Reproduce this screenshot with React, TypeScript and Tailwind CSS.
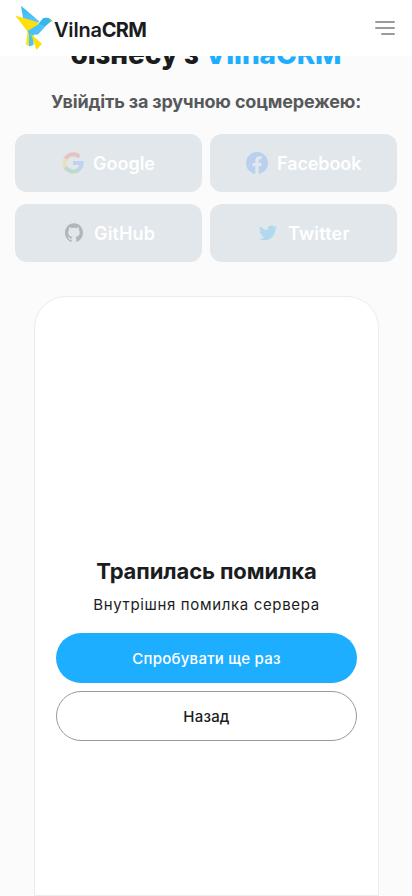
import React from 'react';

function BirdMark() {
  return (
    <svg className="h-[46px] w-[39px] shrink-0" viewBox="0 0 39 46" aria-hidden="true">
      <defs>
        <linearGradient id="sky" x1="0" y1="0" x2="0" y2="1">
          <stop offset="0" stopColor="#36b5ee" />
          <stop offset="1" stopColor="#5fc9f8" />
        </linearGradient>
      </defs>
      <path d="M6 .7 24.500 16.500 22 18.500 8 13.500Z" fill="url(#sky)" />
      <path d="M0.300 10.500 23.500 17.500 22.500 20.500 12.500 26.500Z" fill="#ffdf0a" />
      <path d="M12.500 26 23 19.500 28 13.500Q32 12 35 14L37 15.500 33 18.500 23 29.500 13.500 30Z" fill="#4cc1f5" />
      <path d="M23.500 19 28 13.500Q32 12 35 14L37 15.500 30.500 21Z" fill="#38b5ea" />
      <path d="M34.500 14 38.500 16.500 35.500 16.300Z" fill="#a9cf72" />
      <path d="M12.500 27 15 29 14 41 11 39.500Z" fill="#ffdf0a" />
      <path d="M14 28 18.500 29 18.500 40 14 41.500Z" fill="#4cc1f5" />
      <path d="M16 29 27 38.800 21.500 45Z" fill="#ffdf0a" />
    </svg>
  );
}

function GoogleIcon() {
  return (
    <svg className="size-[22px]" viewBox="0 0 22 22" fill="none" strokeWidth="4">
      <path d="M3.500 6.800A8.700 8.700 0 0 1 17.300 5" stroke="#e8c1c3" />
      <path d="M3.600 15.300A8.800 8.800 0 0 1 3.500 6.800" stroke="#eadfb8" />
      <path d="M17 17.400A8.700 8.700 0 0 1 3.600 15.300" stroke="#bddbcc" />
      <path d="M11 11H19.700A8.700 8.700 0 0 1 16.200 17.900" stroke="#bfd2ee" />
    </svg>
  );
}

function FacebookIcon() {
  return (
    <svg className="size-[22px]" viewBox="0 0 24 24" fill="#b9d0ee">
      <path d="M24 12.073c0-6.627-5.373-12-12-12s-12 5.373-12 12c0 5.990 4.388 10.954 10.125 11.854v-8.385H7.078v-3.470h3.047V9.430c0-3.007 1.792-4.669 4.533-4.669 1.312 0 2.686.235 2.686.235v2.953H15.830c-1.491 0-1.956.925-1.956 1.874v2.250h3.328l-.532 3.470h-2.796v8.385C19.612 23.027 24 18.062 24 12.073z" />
    </svg>
  );
}

function GitHubIcon() {
  return (
    <svg className="-mt-px h-[19px] w-[18px]" viewBox="0 0 24 24" preserveAspectRatio="none" fill="#b0b6b9">
      <path d="M12 .297c-6.630 0-12 5.373-12 12 0 5.303 3.438 9.800 8.205 11.385.600.113.820-.258.820-.577 0-.285-.010-1.040-.015-2.040-3.338.724-4.042-1.610-4.042-1.610C4.422 18.070 3.633 17.700 3.633 17.700c-1.087-.744.084-.729.084-.729 1.205.084 1.838 1.236 1.838 1.236 1.070 1.835 2.809 1.305 3.495.998.108-.776.417-1.305.760-1.605-2.665-.300-5.466-1.332-5.466-5.930 0-1.310.465-2.380 1.235-3.220-.135-.303-.540-1.523.105-3.176 0 0 1.005-.322 3.300 1.230.960-.267 1.980-.399 3-.405 1.020.006 2.040.138 3 .405 2.280-1.552 3.285-1.230 3.285-1.230.645 1.653.240 2.873.120 3.176.765.840 1.230 1.910 1.230 3.220 0 4.610-2.805 5.625-5.475 5.920.420.360.810 1.096.810 2.220 0 1.606-.015 2.896-.015 3.286 0 .315.210.690.825.570C20.565 22.092 24 17.592 24 12.297c0-6.627-5.373-12-12-12" />
    </svg>
  );
}

function TwitterIcon() {
  return (
    <svg className="size-[18px]" viewBox="0 0 24 24" fill="#b0d9ed">
      <path d="M23.953 4.570a10 10 0 01-2.825.775 4.958 4.958 0 002.163-2.723c-.951.555-2.005.959-3.127 1.184a4.920 4.920 0 00-8.384 4.482C7.690 8.095 4.067 6.130 1.640 3.162a4.822 4.822 0 00-.666 2.475c0 1.710.870 3.213 2.188 4.096a4.904 4.904 0 01-2.228-.616v.060a4.923 4.923 0 003.946 4.827 4.996 4.996 0 01-2.212.085 4.936 4.936 0 004.604 3.417 9.867 9.867 0 01-6.102 2.105c-.390 0-.779-.023-1.170-.067a13.995 13.995 0 007.557 2.209c9.053 0 13.998-7.496 13.998-13.985 0-.210 0-.420-.015-.630A9.935 9.935 0 0024 4.590z" />
    </svg>
  );
}

function SocialButton({ icon, label, place, text }: { icon: React.ReactNode; label: string; place: string; text: string }) {
  return (
    <button disabled className={`flex h-[58px] items-center rounded-xl bg-[#e1e7ea] ${place}`}>
      {icon}
      <span className={`mt-0.5 whitespace-nowrap text-[18px] leading-[22px] font-semibold text-white ${text}`}>{label}</span>
    </button>
  );
}

export default function App() {
  return (
    <div className="flex h-[896px] w-full flex-col overflow-hidden bg-[#fbfbfb] font-['Inter','Noto_Sans',sans-serif] text-[#1a1c1e]">
      <header className="relative z-10 flex h-14 shrink-0 items-center justify-between bg-white pr-[17px] pl-[15px]">
        <div className="flex items-center">
          <BirdMark />
          <span className="mt-[3px] whitespace-nowrap text-[20px] leading-6 font-semibold tracking-[-0.2px]">
            Vilna<span className="font-bold tracking-[-0.7px]">CRM</span>
          </span>
        </div>
        <button className="flex w-5 flex-col items-end gap-1" aria-label="Меню">
          <span className="h-0.5 w-5 rounded-full bg-[#969b9d]" />
          <span className="h-0.5 w-5 rounded-full bg-[#969b9d]" />
          <span className="h-0.5 w-3.5 rounded-full bg-[#969b9d]" />
        </button>
      </header>
      <main className="min-h-0 flex-1">
        <h1 className="-mt-[22px] text-center text-[28px] leading-10 font-extrabold tracking-[-0.1px] whitespace-nowrap">
          бізнесу з <span className="text-[#1eaeff]">VilnaCRM</span>
        </h1>
        <p className="mt-4 text-center text-[18px] leading-6 font-bold tracking-[-0.17px] whitespace-nowrap text-[#57595b]">
          Увійдіть за зручною соцмережею:
        </p>
        <div className="mx-[15px] mt-5 grid grid-cols-2 gap-x-2 gap-y-3">
          <SocialButton icon={<GoogleIcon />} label="Google" place="pl-[47px]" text="ml-[9px]" />
          <SocialButton icon={<FacebookIcon />} label="Facebook" place="pl-9" text="ml-[9px] tracking-[-0.1px]" />
          <SocialButton icon={<GitHubIcon />} label="GitHub" place="pl-[50px]" text="ml-[11px] tracking-[0.15px]" />
          <SocialButton icon={<TwitterIcon />} label="Twitter" place="pl-[49px]" text="ml-[11px] tracking-[0.2px]" />
        </div>
        <section className="mt-[34px] ml-[34px] flex h-[600px] w-[345px] flex-col items-center rounded-t-[32px] border border-[#eaecee] bg-white px-[21px] pt-[258px]">
          <h2 className="text-[22px] leading-8 font-bold tracking-[-0.1px] whitespace-nowrap">Трапилась помилка</h2>
          <p className="mt-1.5 text-[15px] leading-6 tracking-[0.65px] whitespace-nowrap">Внутрішня помилка сервера</p>
          <button className="mt-4 h-[50px] w-full shrink-0 rounded-full bg-[#1eaeff] pt-0.5 text-[15px] font-medium tracking-[0.25px] text-white">Спробувати ще раз</button>
          <button className="mt-2 h-[50px] w-full shrink-0 rounded-full border border-[#969b9d] pt-0.5 text-[15px] font-medium tracking-[0.2px]">Назад</button>
        </section>
      </main>
    </div>
  );
}
